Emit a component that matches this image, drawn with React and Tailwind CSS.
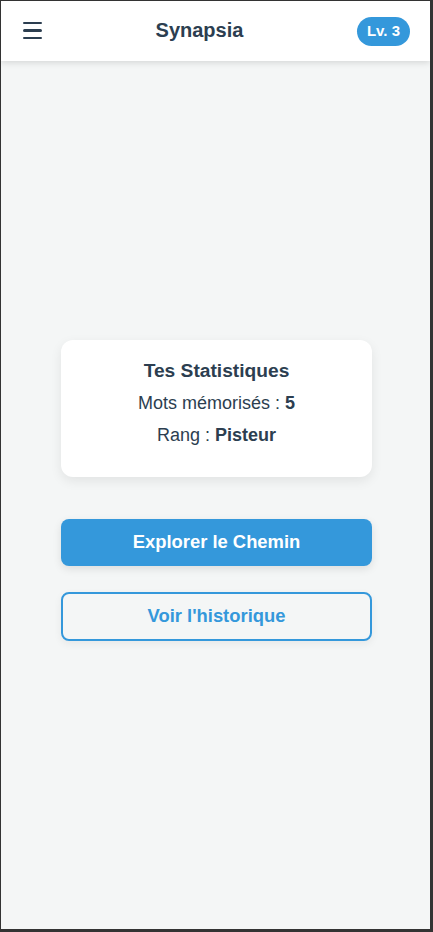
export default function App() {
  return (
    <div
      className="h-[932px] w-full flex flex-col bg-[#f4f6f6] border-t border-l border-r-[3px] border-b-[3px] border-[#333333] overflow-hidden"
      style={{ fontFamily: '"Liberation Sans", Arial, sans-serif' }}
    >
      <header className="h-[60px] shrink-0 bg-white flex items-center justify-between pl-[22px] pr-[20px] shadow-[0_2px_6px_rgba(0,0,0,0.12)] relative z-10">
        <div className="w-[19px] flex flex-col gap-[5.5px] -mt-[1px]">
          <div className="h-[2.3px] bg-[#2c3e50] rounded-full" />
          <div className="h-[2.3px] bg-[#2c3e50] rounded-full" />
          <div className="h-[2.3px] bg-[#2c3e50] rounded-full" />
        </div>
        <h1 className="text-[20px] font-bold text-[#2c3e50] leading-none -mt-[2px]">Synapsia</h1>
        <span className="h-[29px] px-[10px] rounded-full bg-[#3498db] text-white text-[15px] font-bold flex items-center">
          Lv. 3
        </span>
      </header>
      <main className="flex-1 flex flex-col items-center justify-center pb-[10px] pl-[2px]">
        <div className="w-[311px] bg-white rounded-[12px] shadow-[0_4px_12px_rgba(0,0,0,0.08)] pt-[17px] pb-[28px] flex flex-col items-center text-[#2c3e50]">
          <h2 className="text-[19.2px] font-bold leading-[28px]">Tes Statistiques</h2>
          <p className="mt-[5px] text-[18px] leading-[27px]">
            Mots mémorisés : <strong className="font-bold">5</strong>
          </p>
          <p className="mt-[5px] text-[18px] leading-[27px]">
            Rang : <strong className="font-bold">Pisteur</strong>
          </p>
        </div>
        <button className="mt-[42px] w-[311px] h-[47px] rounded-[8px] bg-[#3498db] text-white text-[18.4px] font-bold shadow-[0_3px_8px_rgba(0,0,0,0.1)]">
          Explorer le Chemin
        </button>
        <button className="mt-[26px] w-[311px] h-[49px] rounded-[8px] border-2 border-[#3498db] bg-transparent text-[#3498db] text-[18.4px] font-bold shadow-[0_3px_8px_rgba(0,0,0,0.06)]">
          Voir l'historique
        </button>
      </main>
    </div>
  );
}
